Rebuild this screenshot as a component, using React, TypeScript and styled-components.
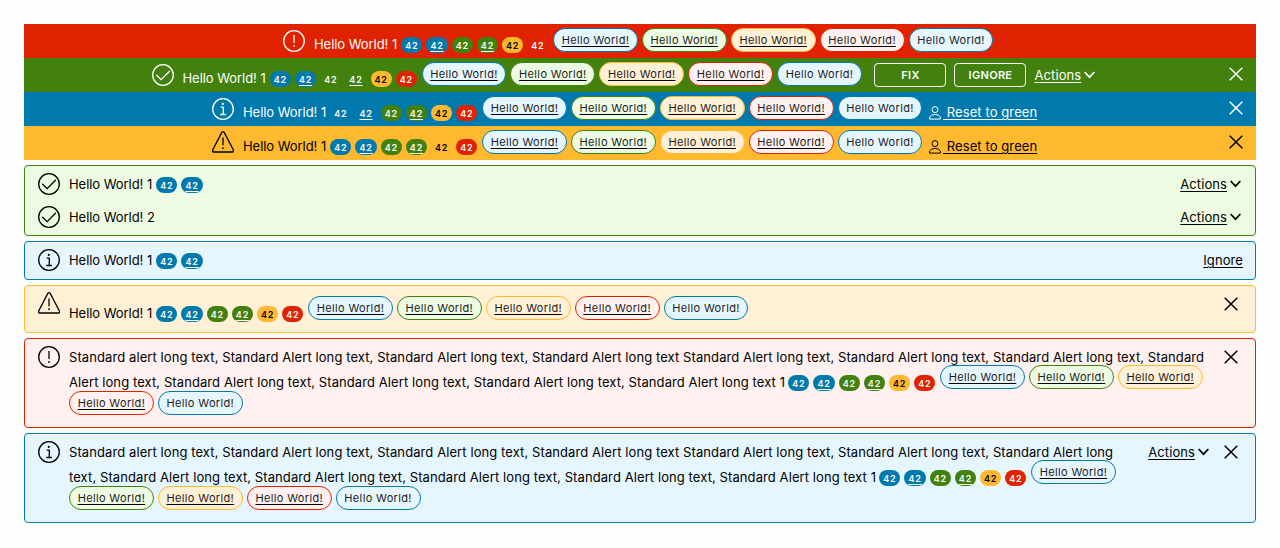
import React from "react";
import styled, { createGlobalStyle } from "styled-components";

type Status = "info" | "success" | "warning" | "danger";

const solid: Record<Status, string> = {
  info: "#0079ad",
  success: "#42810e",
  warning: "#ffb92e",
  danger: "#e02200",
};
const tint: Record<Status, string> = {
  info: "#e6f6ff",
  success: "#eefbe3",
  warning: "#fff0d6",
  danger: "#fff1f0",
};

const GlobalStyle = createGlobalStyle`
  * { box-sizing: border-box; }
  body {
    margin: 0;
    background: #fcfdfd;
    color: #000;
    font-family: Inter, "Liberation Sans", sans-serif;
    font-size: 13px;
    line-height: 18px;
    letter-spacing: 0.09px;
  }
`;

const Page = styled.main`
  padding: 24px 24px 0;
  display: flex;
  flex-direction: column;
  gap: 5px;
`;

const Banners = styled.section`
  display: flex;
  flex-direction: column;
`;

const Banner = styled.div<{ $status: Status; $indent: number }>`
  display: flex;
  align-items: flex-start;
  height: 34px;
  padding: 0 13px 0 ${(p) => p.$indent}px;
  background: ${(p) => solid[p.$status]};
  color: ${(p) => (p.$status === "warning" ? "#000" : "#fff")};
`;

const BannerContent = styled.div`
  margin-left: 9px;
  padding-top: 11px;
`;

const Card = styled.section<{ $status: Status; $height: number }>`
  height: ${(p) => p.$height}px;
  border: 1px solid ${(p) => solid[p.$status]};
  border-radius: 4px;
  background: ${(p) => tint[p.$status]};
  padding: 0 12px 0 13px;
`;

const CardItem = styled.div`
  display: flex;
  align-items: flex-start;
  height: 33px;
`;

const CardContent = styled.div<{ $top?: number }>`
  margin-left: 9px;
  padding-top: ${(p) => p.$top ?? 9}px;
`;

const Line = styled.div<{ $height?: number }>`
  display: flex;
  align-items: flex-start;
  height: ${(p) => p.$height ?? 25}px;
  white-space: nowrap;
`;

const Message = styled.span<{ $width?: number }>`
  flex: none;
  ${(p) => p.$width && `width: ${p.$width}px;`}
`;

const Greeting = styled(Message)`
  letter-spacing: -0.05px;
`;

const BadgeGroup = styled.span`
  display: flex;
  gap: 4px;
  margin: 2px 4.6px 0 0;
`;

const Badge = styled.span<{ $status: Status; $underlined?: boolean }>`
  display: block;
  width: 21.2px;
  height: 16px;
  border-radius: 8px;
  background: ${(p) => solid[p.$status]};
  color: ${(p) => (p.$status === "warning" ? "#000" : "#fff")};
  font-size: 9px;
  font-weight: 600;
  line-height: 17px;
  letter-spacing: 0.8px;
  text-align: center;
  text-decoration: ${(p) => (p.$underlined ? "underline" : "none")};
  text-decoration-thickness: 1px;
  text-underline-offset: 2px;
`;

const PillGroup = styled.span<{ $lift: number }>`
  display: flex;
  gap: 4px;
  margin-top: -${(p) => p.$lift}px;
`;

const Pill = styled.span<{ $status: Status; $underlined?: boolean }>`
  display: block;
  width: 84.9px;
  height: 24px;
  border: 1px solid ${(p) => solid[p.$status]};
  border-radius: 12px;
  background: ${(p) => tint[p.$status]};
  color: #1b1b1b;
  font-size: 11px;
  line-height: 22px;
  letter-spacing: 0.35px;
  text-align: center;
  text-decoration: ${(p) => (p.$underlined ? "underline" : "none")};
  text-decoration-color: #000;
  text-decoration-thickness: 1px;
  text-underline-offset: 2px;
`;

const Push = styled.span`
  flex: 1;
`;

const TextLink = styled.a`
  color: inherit;
  text-decoration: underline;
  text-decoration-thickness: 1px;
  text-underline-offset: 2px;
  white-space: pre;
`;

const Actions = styled.span<{ $top: number; $right?: number }>`
  display: flex;
  align-items: flex-start;
  gap: 3px;
  margin: ${(p) => p.$top}px ${(p) => p.$right ?? 0}px 0 0;
`;

const Reset = styled.span`
  display: flex;
  gap: 2px;
  margin: 11px 0 0 6.6px;
`;

const BannerButton = styled.button`
  width: 72px;
  height: 24px;
  margin: 5px 8px 0 0;
  padding: 0;
  border: 1px solid #fff;
  border-radius: 4px;
  background: transparent;
  color: #fff;
  font: 600 11px/22px Inter, "Liberation Sans", sans-serif;
  letter-spacing: 0.3px;
`;

const ButtonGroup = styled.span`
  display: flex;
  margin-left: 12.5px;
`;

const IconBox = styled.svg<{ $top: number }>`
  display: block;
  flex: none;
  margin-top: ${(p) => p.$top}px;
  fill: none;
  stroke: currentColor;
`;

function StatusIcon({ status, top }: { status: Status; top: number }) {
  return (
    <IconBox $top={top} width={22} height={22} viewBox="0 0 22 22" strokeWidth={1.3}>
      {status === "warning" ? (
        <>
          <path d="M9.8 1.4 L0.8 18.8 Q0.1 20.8 1.9 21 H20.3 Q22.1 20.8 21.3 18.8 L12.2 1.4 Q11 -0.1 9.8 1.4Z" />
          <path d="M11 6.4 V14.2" />
          <circle cx="11" cy="17.2" r="0.9" fill="currentColor" stroke="none" />
        </>
      ) : (
        <circle cx="11" cy="11" r="10.3" />
      )}
      {status === "success" && <path d="M4.7 11.2 L9.1 15.6 L17.5 7.2" strokeLinecap="round" />}
      {status === "danger" && (
        <>
          <path d="M11 5 V13" />
          <circle cx="11" cy="16" r="0.9" fill="currentColor" stroke="none" />
        </>
      )}
      {status === "info" && (
        <>
          <circle cx="10.8" cy="5.9" r="1.1" fill="currentColor" stroke="none" />
          <path d="M8.7 9.1 H11.3 V16.3 M8.2 16.5 H14" />
        </>
      )}
    </IconBox>
  );
}

const Chevron = () => (
  <IconBox $top={5} width={11} height={8} viewBox="0 0 11 8" strokeWidth={1.7}>
    <path d="M0.6 1 L5.5 6.2 L10.4 1" />
  </IconBox>
);

const Close = ({ top }: { top: number }) => (
  <IconBox $top={top} width={14} height={14} viewBox="0 0 14 14" strokeWidth={1.5}>
    <path d="M0.7 0.7 L13.3 13.3 M13.3 0.7 L0.7 13.3" />
  </IconBox>
);

const UserIcon = () => (
  <IconBox $top={3} width={12} height={14} viewBox="0 0 12 14" strokeWidth={1}>
    <circle cx="6" cy="3.6" r="3" />
    <path d="M0.6 13.1 V11 Q2.2 8.4 6 8.4 Q9.8 8.4 11.4 11 V13.1Z" />
  </IconBox>
);

const CloseSlot = styled.span<{ $right?: number }>`
  margin-right: ${(p) => p.$right ?? 0}px;
`;

const badges: { status: Status; underlined?: boolean }[] = [
  { status: "info" },
  { status: "info", underlined: true },
  { status: "success" },
  { status: "success", underlined: true },
  { status: "warning" },
  { status: "danger" },
];
const pills: { status: Status; underlined?: boolean }[] = [
  { status: "info", underlined: true },
  { status: "success", underlined: true },
  { status: "warning", underlined: true },
  { status: "danger", underlined: true },
  { status: "info" },
];

const Badges = ({ count = 6 }: { count?: number }) => (
  <BadgeGroup>
    {badges.slice(0, count).map((b, i) => (
      <Badge key={i} $status={b.status} $underlined={b.underlined}>42</Badge>
    ))}
  </BadgeGroup>
);

const Pills = ({ from = 0, to = 5, lift = 7 }: { from?: number; to?: number; lift?: number }) => (
  <PillGroup $lift={lift}>
    {pills.slice(from, to).map((p, i) => (
      <Pill key={i} $status={p.status} $underlined={p.underlined}>Hello World!</Pill>
    ))}
  </PillGroup>
);

function BannerRow({ status, indent, iconTop = 6, closable, children }: {
  status: Status; indent: number; iconTop?: number; closable?: boolean; children?: React.ReactNode;
}) {
  return (
    <Banner $status={status} $indent={indent}>
      <StatusIcon status={status} top={iconTop} />
      <BannerContent>
        <Line>
          <Greeting $width={87.3}>Hello World! 1</Greeting>
          <Badges />
          <Pills />
        </Line>
      </BannerContent>
      {children}
      <Push />
      {closable && <Close top={9} />}
    </Banner>
  );
}

const ResetLink = () => (
  <Reset>
    <UserIcon />
    <TextLink> Reset to green</TextLink>
  </Reset>
);

const ActionsMenu = ({ top, right }: { top: number; right?: number }) => (
  <Actions $top={top} $right={right}>
    <TextLink>Actions</TextLink>
    <Chevron />
  </Actions>
);

export default function App() {
  return (
    <>
      <GlobalStyle />
      <Page>
        <Banners>
          <BannerRow status="danger" indent={259} />
          <BannerRow status="success" indent={127.5} closable>
            <ButtonGroup>
              <BannerButton>FIX</BannerButton>
              <BannerButton>IGNORE</BannerButton>
            </ButtonGroup>
            <ActionsMenu top={8} />
          </BannerRow>
          <BannerRow status="info" indent={188} closable>
            <ResetLink />
          </BannerRow>
          <BannerRow status="warning" indent={188} iconTop={5} closable>
            <ResetLink />
          </BannerRow>
        </Banners>

        <Card $status="success" $height={71}>
          <CardItem>
            <StatusIcon status="success" top={7} />
            <CardContent>
              <Line>
                <Greeting $width={87.3}>Hello World! 1</Greeting>
                <Badges count={2} />
              </Line>
            </CardContent>
            <Push />
            <ActionsMenu top={9} right={2} />
          </CardItem>
          <CardItem>
            <StatusIcon status="success" top={7} />
            <CardContent>
              <Line>
                <Greeting>Hello World! 2</Greeting>
              </Line>
            </CardContent>
            <Push />
            <ActionsMenu top={9} right={2} />
          </CardItem>
        </Card>

        <Card $status="info" $height={39}>
          <CardItem>
            <StatusIcon status="info" top={7} />
            <CardContent>
              <Line>
                <Greeting $width={87.3}>Hello World! 1</Greeting>
                <Badges count={2} />
              </Line>
            </CardContent>
            <Push />
            <Actions $top={9}>
              <TextLink>Ignore</TextLink>
            </Actions>
          </CardItem>
        </Card>

        <Card $status="warning" $height={48}>
          <CardItem>
            <StatusIcon status="warning" top={6} />
            <CardContent $top={18}>
              <Line>
                <Greeting $width={87.3}>Hello World! 1</Greeting>
                <Badges />
                <Pills lift={8} />
              </Line>
            </CardContent>
            <Push />
            <CloseSlot $right={5}><Close top={11} /></CloseSlot>
          </CardItem>
        </Card>

        <Card $status="danger" $height={90}>
          <CardItem>
            <StatusIcon status="danger" top={7} />
            <CardContent>
              <Line>
                <Message>
                  Standard alert long text, Standard Alert long text, Standard Alert long text, Standard Alert long
                  text Standard Alert long text, Standard Alert long text, Standard Alert long text, Standard
                </Message>
              </Line>
              <Line $height={27}>
                <Message $width={719.3}>
                  Alert long text, Standard Alert long text, Standard Alert long text, Standard Alert long text,
                  Standard Alert long text 1
                </Message>
                <Badges />
                <Pills to={3} lift={8} />
              </Line>
              <Line>
                <Pills from={3} lift={9} />
              </Line>
            </CardContent>
            <Push />
            <CloseSlot $right={5}><Close top={11} /></CloseSlot>
          </CardItem>
        </Card>

        <Card $status="info" $height={90}>
          <CardItem>
            <StatusIcon status="info" top={7} />
            <CardContent>
              <Line>
                <Message>
                  Standard alert long text, Standard Alert long text, Standard Alert long text, Standard Alert long
                  text Standard Alert long text, Standard Alert long text, Standard Alert long
                </Message>
              </Line>
              <Line $height={27}>
                <Message $width={810.3}>
                  text, Standard Alert long text, Standard Alert long text, Standard Alert long text, Standard Alert
                  long text, Standard Alert long text 1
                </Message>
                <Badges />
                <Pills to={1} lift={8} />
              </Line>
              <Line>
                <Pills from={1} lift={9} />
              </Line>
            </CardContent>
            <Push />
            <ActionsMenu top={9} right={15} />
            <CloseSlot $right={5}><Close top={11} /></CloseSlot>
          </CardItem>
        </Card>
      </Page>
    </>
  );
}
